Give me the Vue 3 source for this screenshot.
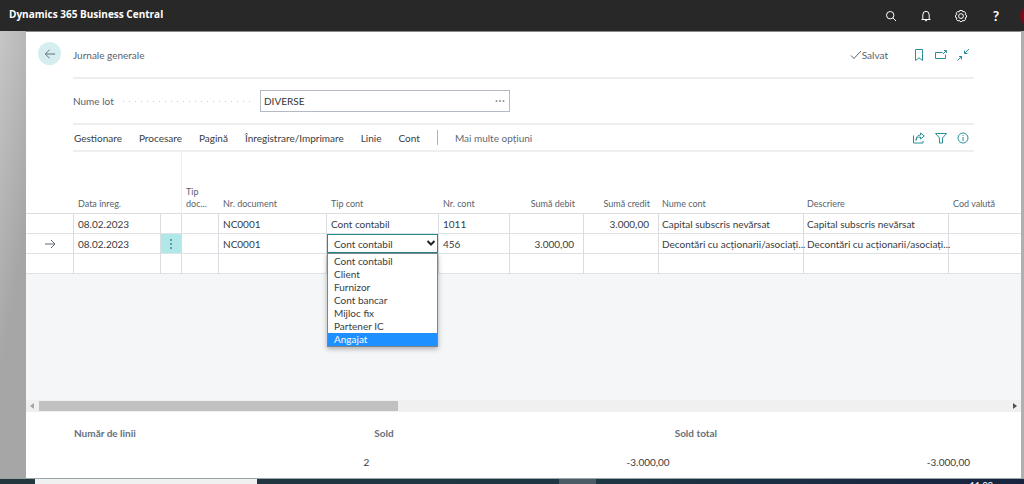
<script setup>
import { ref } from 'vue'

const batch = ref('DIVERSE')
const accountType = ref('Cont contabil')
const highlighted = 'Angajat'
const accountTypes = ['Cont contabil', 'Client', 'Furnizor', 'Cont bancar', 'Mijloc fix', 'Partener IC', 'Angajat']
const actions = ['Gestionare', 'Procesare', 'Pagină', 'Înregistrare/Imprimare', 'Linie', 'Cont']

const columns = [
  { key: 'mark', label: '' },
  { key: 'date', label: 'Data înreg.' },
  { key: 'menu', label: '' },
  { key: 'docType', label: 'Tip doc...' },
  { key: 'docNo', label: 'Nr. document' },
  { key: 'type', label: 'Tip cont' },
  { key: 'accNo', label: 'Nr. cont' },
  { key: 'debit', label: 'Sumă debit' },
  { key: 'credit', label: 'Sumă credit' },
  { key: 'accName', label: 'Nume cont' },
  { key: 'desc', label: 'Descriere' },
  { key: 'currency', label: 'Cod valută' },
]

const lines = [
  { id: 1, date: '08.02.2023', docNo: 'NC0001', type: 'Cont contabil', accNo: '1011', credit: '3.000,00', accName: 'Capital subscris nevărsat', desc: 'Capital subscris nevărsat' },
  { id: 2, current: true, date: '08.02.2023', docNo: 'NC0001', accNo: '456', debit: '3.000,00', accName: 'Decontări cu acționarii/asociați...', desc: 'Decontări cu acționarii/asociați...' },
  { id: 3 },
]

const totals = [
  { label: 'Număr de linii', value: '2' },
  { label: 'Sold', value: '-3.000,00' },
  { label: 'Sold total', value: '-3.000,00' },
]
</script>

<template>
  <div class="shell">
    <header class="topbar">
      <a class="brand" href="#">Dynamics 365 Business Central</a>
      <nav class="top-icons">
        <button aria-label="Căutare">
          <svg viewBox="0 0 14 14"><circle cx="6.2" cy="6.2" r="3.7" /><path d="M9 9l3 3" /></svg>
        </button>
        <button aria-label="Notificări">
          <svg viewBox="0 0 14 14"><path d="M2.5 10.5h9M3.8 10.5V6a3.2 3.7 0 0 1 6.4 0v4.5M5.8 11.2q1.2 1.6 2.4 0" /></svg>
        </button>
        <button aria-label="Setări">
          <svg viewBox="0 0 14 14"><path d="M5.700 1.500h2.600l.6 1.400 1.500-.4 1.400 1.700-.7 1.300 1.400.8v1.900l-1.400.7.5 1.600-1.500 1.400-1.500-.5-.7 1.200H6.100l-.7-1.200-1.500.5-1.500-1.400.5-1.600-1.400-.7V6.300l1.400-.8-.7-1.300 1.400-1.700 1.500.4z" /><circle cx="7" cy="7.100" r="2.400" /></svg>
        </button>
        <button aria-label="Ajutor" class="help">?</button>
      </nav>
      <span class="avatar"></span>
    </header>

    <div class="stage">
      <main class="page">
        <div class="head">
          <button class="back" aria-label="Înapoi">
            <svg viewBox="0 0 14 14"><path d="M13 7H2M6.5 2L1.5 7l5 5" /></svg>
          </button>
          <div class="title-row">
            <h1>Jurnale generale</h1>
            <div class="page-tools">
              <span class="saved">
                <svg viewBox="0 0 12 12"><path d="M1 6.5l3 3L11 2" /></svg>Salvat
              </span>
              <button aria-label="Marcaj">
                <svg viewBox="0 0 14 14"><path d="M3.5 1.5h7v11L7 9.8l-3.5 2.7z" /></svg>
              </button>
              <button aria-label="Deschidere în fereastră nouă">
                <svg viewBox="0 0 14 14"><path d="M8.500 4.500h-7v6h10V6.500M9 6l3-3M10 2.500h2.500V5" /></svg>
              </button>
              <button aria-label="Restrângere">
                <svg viewBox="0 0 14 14"><path d="M13 1L8.500 5.500M8.500 2.500v3h3M1.500 12.500L6 8M3 8.500h2.500v3" /></svg>
              </button>
            </div>
          </div>
        </div>

        <div class="batch">
          <label for="batch">Nume lot</label>
          <span class="leader"></span>
          <div class="lookup">
            <input id="batch" v-model="batch" type="text">
            <button aria-label="Selectare lot">
              <svg viewBox="0 0 10 4"><circle cx="1.5" cy="2" r="1" /><circle cx="5" cy="2" r="1" /><circle cx="8.500" cy="2" r="1" /></svg>
            </button>
          </div>
        </div>

        <div class="actions">
          <button v-for="a in actions" :key="a">{{ a }}</button>
          <span class="divider"></span>
          <button class="more">Mai multe opțiuni</button>
          <div class="action-icons">
            <button aria-label="Partajare">
              <svg viewBox="0 0 14 14"><path d="M1.500 4.500v7.500h9.500v-2M4 9.500c.3-2.500 2-3.500 4.500-3.500V8l3.800-3L8.500 2v2C5.500 4.200 4 6 4 9.500z" /></svg>
            </button>
            <button aria-label="Filtrare">
              <svg viewBox="0 0 14 14"><path d="M1.500 2.500h11l-4 4.500v5h-3V7z" /></svg>
            </button>
            <button aria-label="Informații">
              <svg viewBox="0 0 14 14"><circle cx="7" cy="7" r="5" /><path d="M7 6v4M7 4v1" /></svg>
            </button>
          </div>
        </div>

        <section class="grid">
          <table>
            <colgroup>
              <col v-for="c in columns" :key="c.key" :class="'w-' + c.key">
            </colgroup>
            <thead>
              <tr>
                <th v-for="c in columns" :key="c.key" :class="c.key" scope="col">{{ c.label }}</th>
              </tr>
            </thead>
            <tbody>
              <tr v-for="line in lines" :key="line.id" :class="{ current: line.current }">
                <td v-for="c in columns" :key="c.key" :class="c.key">
                  <svg v-if="c.key === 'mark' && line.current" class="arrow" viewBox="0 0 12 12"><path d="M1 6h10M7 2l4 4-4 4" /></svg>
                  <button v-else-if="c.key === 'menu' && line.current" class="row-menu" aria-label="Mai multe opțiuni pentru linie">
                    <svg viewBox="0 0 4 12"><circle cx="2" cy="2" r="1" /><circle cx="2" cy="6" r="1" /><circle cx="2" cy="10" r="1" /></svg>
                  </button>
                  <div v-else-if="c.key === 'type' && line.current" class="combo">
                    <select v-model="accountType" aria-label="Tip cont">
                      <option v-for="t in accountTypes" :key="t">{{ t }}</option>
                    </select>
                    <svg viewBox="0 0 10 8"><path d="M1.500 2L5 5.500 8.500 2" /></svg>
                    <ul role="listbox" aria-label="Tip cont">
                      <li v-for="t in accountTypes" :key="t" role="option" :aria-selected="t === highlighted">{{ t }}</li>
                    </ul>
                  </div>
                  <template v-else>{{ line[c.key] }}</template>
                </td>
              </tr>
            </tbody>
          </table>
        </section>

        <div class="scrollbar">
          <svg class="left" viewBox="0 0 8 8"><path d="M6 1v6L2 4z" /></svg>
          <div class="track"><div class="thumb"></div></div>
          <svg class="right" viewBox="0 0 8 8"><path d="M2 1v6l4-3z" /></svg>
        </div>

        <dl class="totals">
          <div v-for="t in totals" :key="t.label">
            <dt>{{ t.label }}</dt>
            <dd>{{ t.value }}</dd>
          </div>
        </dl>
      </main>
    </div>

    <footer class="taskbar">
      <div class="search"></div>
      <div class="task"></div>
      <time class="clock">11:00</time>
    </footer>
  </div>
</template>

<style>
body {
  margin: 0;
}
</style>

<style scoped>
* {
  box-sizing: border-box;
}

.shell {
  display: flex;
  flex-direction: column;
  min-height: 100vh;
  overflow: hidden;
  font-family: Lato, "Open Sans", sans-serif;
  font-size: 10px;
  line-height: 14px;
  color: #383c42;
}

button {
  padding: 0;
  border: 0;
  background: none;
  font: inherit;
  color: inherit;
  white-space: nowrap;
}

svg {
  display: block;
  fill: none;
  stroke: currentColor;
  stroke-width: 1;
}

.topbar {
  position: relative;
  display: flex;
  align-items: center;
  justify-content: space-between;
  height: 31px;
  padding: 0 21px 3px 9px;
  background: #282828;
  color: #fff;
}

.brand {
  color: #fff;
  font-family: "Open Sans", sans-serif;
  font-size: 10px;
  font-weight: 700;
  text-decoration: none;
}

.top-icons {
  display: flex;
  gap: 21px;
  padding-top: 4px;
}

.top-icons button,
.top-icons svg {
  width: 14px;
  height: 14px;
}

.help {
  font-size: 14px;
  font-weight: 700;
}

.avatar {
  position: absolute;
  top: 5px;
  right: -18px;
  width: 22px;
  height: 22px;
  border-radius: 50%;
  background: #750b1c;
}

.stage {
  display: flex;
  flex: 1;
  padding: 0 3px 0 26px;
  background: linear-gradient(100deg, #c6c6c6 0, #a6a6a6 60px, #b0b0b0 100%);
}

.page {
  display: flex;
  flex: 1;
  flex-direction: column;
  min-width: 0;
  border-top: 1px solid #8a8a8a;
  background: #fff;
}

.head {
  display: flex;
  gap: 12px;
  padding: 0 47px 0 12px;
}

.back {
  display: flex;
  align-items: center;
  justify-content: center;
  width: 23px;
  height: 23px;
  margin-top: 10px;
  border-radius: 50%;
  background: #d6eef0;
  color: #505c6d;
}

.back svg {
  width: 12px;
  height: 12px;
}

.title-row {
  display: flex;
  flex: 1;
  align-items: center;
  justify-content: space-between;
  height: 47px;
  border-bottom: 2px solid #eee;
}

h1 {
  margin: 0;
  font-size: 10px;
  font-weight: 400;
  color: #58626e;
}

.page-tools,
.action-icons {
  display: flex;
  align-items: center;
  gap: 8px;
  padding-right: 4px;
  color: #2a8f96;
}

.page-tools svg,
.action-icons svg {
  width: 14px;
  height: 14px;
}

.page-tools .saved svg {
  width: 12px;
  height: 12px;
}

.saved {
  display: flex;
  align-items: center;
  margin-right: 16px;
  color: #58626e;
}

.batch {
  display: flex;
  align-items: center;
  height: 46px;
  margin: 0 47px;
  border-bottom: 2px solid #eee;
  color: #58626e;
}

.batch label {
  width: 50px;
}

.leader {
  width: 130px;
  height: 1px;
  margin-right: 7px;
  background: repeating-linear-gradient(90deg, #c8ccd0 0 1px, transparent 1px 6px);
}

.lookup {
  display: flex;
  align-items: center;
  width: 250px;
  height: 22px;
  padding-right: 4px;
  border: 1px solid #b3bac3;
}

.lookup input {
  flex: 1;
  min-width: 0;
  padding: 0 3px;
  border: 0;
  outline: 0;
  background: none;
  font: inherit;
  color: #333;
}

.lookup svg {
  width: 10px;
  height: 4px;
  fill: #8a929c;
  stroke: none;
}

.actions {
  display: flex;
  align-items: center;
  gap: 17px;
  height: 27px;
  margin: 0 47px;
  padding-left: 1px;
  border-bottom: 2px solid #eee;
}

.divider {
  width: 1px;
  height: 15px;
  background: #adb2b8;
}

.more {
  color: #606a76;
}

.action-icons {
  margin-left: auto;
}

.grid {
  flex: 1;
  background: #f4f6f8;
}

table {
  width: 100%;
  border-collapse: separate;
  border-spacing: 0;
  table-layout: fixed;
  background: #fff;
}

.w-mark { width: 48px; }
.w-date { width: 87px; }
.w-menu { width: 21px; }
.w-docType { width: 37px; }
.w-docNo { width: 108px; }
.w-type { width: 112px; }
.w-accNo { width: 71px; }
.w-debit { width: 74px; }
.w-credit { width: 75px; }
.w-accName { width: 145px; }
.w-desc { width: 145px; }

th {
  height: 62px;
  padding: 0 5px 3px 4px;
  border-bottom: 1px solid #dcdfe2;
  font-size: 9px;
  font-weight: 400;
  line-height: 12px;
  text-align: left;
  vertical-align: bottom;
  color: #58626e;
}

th.menu {
  border-right: 1px solid #f0f0f0;
}

td {
  height: 20px;
  padding: 0 4px;
  border-right: 1px solid #d9dce0;
  border-bottom: 1px solid #dfe2e5;
  line-height: 14px;
  white-space: nowrap;
}

td.currency {
  border-right: 0;
}

.accName,
.desc {
  padding-right: 0;
  padding-left: 3px;
}

.debit,
.credit {
  padding-right: 9px;
  text-align: right;
}

td.menu,
.current td.type {
  padding: 0;
}

.current td.menu {
  background: #b0e8ea;
}

.arrow {
  width: 12px;
  height: 12px;
  margin: 0 auto;
  color: #606a76;
}

.row-menu {
  display: flex;
  align-items: center;
  justify-content: center;
  width: 100%;
}

.row-menu svg {
  width: 4px;
  height: 12px;
  fill: #4f7f88;
  stroke: none;
}

.combo {
  position: relative;
}

.combo select {
  display: block;
  width: 100%;
  height: 19px;
  padding: 0 6px;
  border: 1px solid #238a90;
  border-radius: 0;
  outline: 0;
  appearance: none;
  background: #fff;
  font: inherit;
  color: #383c42;
}

.combo svg {
  position: absolute;
  top: 5px;
  right: 2px;
  width: 10px;
  height: 8px;
  color: #222;
  stroke-width: 2;
  pointer-events: none;
}

.combo ul {
  position: absolute;
  z-index: 2;
  top: 19px;
  left: 0;
  width: 100%;
  margin: 0;
  padding: 1px 0 0;
  border: 1px solid #808488;
  background: #fff;
  box-shadow: 0 2px 5px rgba(0, 0, 0, 0.3);
  list-style: none;
}

.combo li {
  padding: 0 6px;
  line-height: 13px;
}

.combo li[aria-selected="true"] {
  background: #1e90ff;
  color: #fff;
}

.scrollbar {
  display: flex;
  align-items: center;
  gap: 3px;
  height: 12px;
  padding: 0 2px;
  background: #f0f0f0;
}

.scrollbar svg {
  width: 8px;
  height: 8px;
  stroke: none;
}

.left {
  fill: #a3a3a3;
}

.right {
  fill: #505050;
}

.track {
  flex: 1;
}

.thumb {
  width: 37%;
  height: 10px;
  background: #c1c1c1;
}

.totals {
  display: grid;
  grid-template-columns: repeat(3, 1fr);
  gap: 5px;
  height: 66px;
  margin: 0;
  padding: 14px 51px 0 48px;
}

dt {
  font-weight: 700;
  color: #66707c;
}

dd {
  margin: 15px 0 0;
  text-align: right;
}

.taskbar {
  display: flex;
  height: 6px;
  padding-left: 35px;
  overflow: hidden;
  border-top: 1px solid #9aa5a8;
  background: linear-gradient(90deg, #22383e, #1d3644 60%, #18243f);
}

.search {
  width: 222px;
  background: #f0f0f0;
}

.task {
  width: 37px;
  margin-left: 302px;
  background: #4c5c66;
}

.clock {
  margin: 0 31px 0 auto;
  font-size: 9px;
  line-height: 14px;
  color: #fff;
}
</style>
